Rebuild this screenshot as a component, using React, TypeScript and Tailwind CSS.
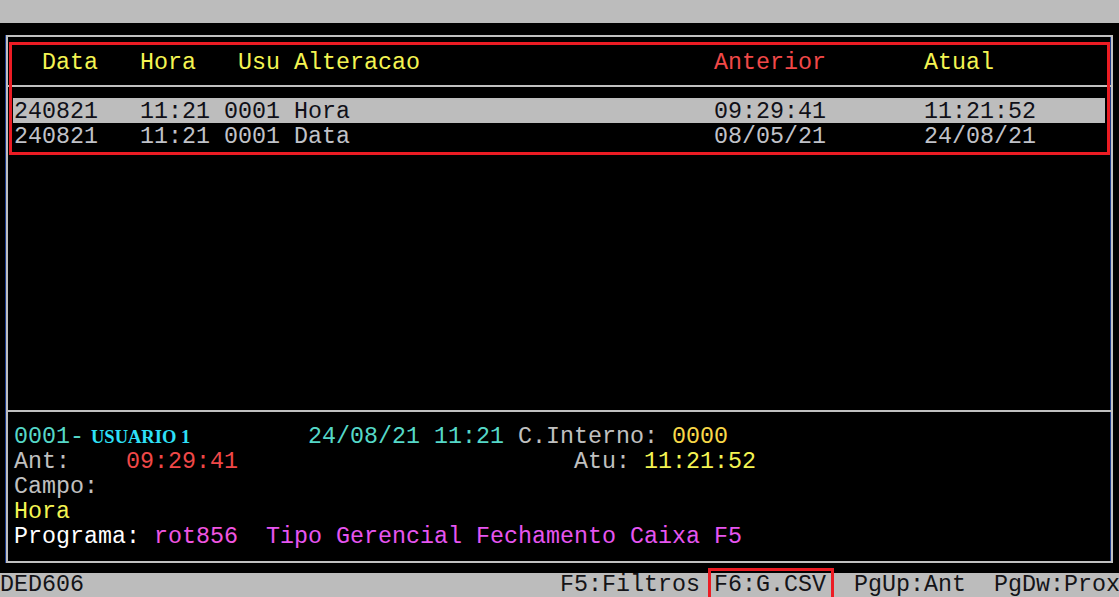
import React from 'react';

const mono = "font-['Liberation_Mono',monospace] text-[23.333px]";

const changes = [
  { data: '240821', hora: '11:21', usu: '0001', campo: 'Hora', ant: '09:29:41', atu: '11:21:52' },
  { data: '240821', hora: '11:21', usu: '0001', campo: 'Data', ant: '08/05/21', atu: '24/08/21' },
];

const Line: React.FC<{ children?: React.ReactNode; className?: string }> = ({ children, className = '' }) => (
  <div className={`h-[25px] pt-[2px] leading-[25px] whitespace-pre ${className}`}>{children}</div>
);

const Separator = () => <div className="h-[2px] bg-[#c0c0c0]" />;

const App: React.FC = () => {
  return (
    <div className={`relative w-[1119px] h-[597px] overflow-hidden bg-black flex flex-col ${mono}`}>
      <div className="h-[23px] bg-[#bcbcbc]" />

      <div className="h-[550px] pt-[12px]">
        {/* moldura principal */}
        <div className="ml-[6px] w-[1107px] h-[528px] border-2 border-[#c0c0c0] shadow-[-1px_0_0_#1a3a8a,inset_-1px_0_0_#1a3a8a] flex flex-col">
          <div className="h-[48px] pt-[12px] pl-[6px]">
            <Line className="text-[#f4f452]">
              {'  Data   Hora   Usu Alteracao'.padEnd(50)}
              <span className="text-[#f04848]">Anterior</span>
              {'       Atual'}
            </Line>
          </div>
          <Separator />

          <div className="flex-1 pt-[11px]">
            {changes.map((c, i) => (
              <Line
                key={i}
                className={
                  i === 0
                    ? 'ml-[5px] w-[1092px] pl-[1px] bg-[#bdbdbd] text-[#101018]'
                    : 'pl-[6px] text-[#c0c2c8]'
                }
              >
                {`${c.data}   ${c.hora} ${c.usu} ${c.campo.padEnd(30)}${c.ant}       ${c.atu}`}
              </Line>
            ))}
          </div>
          <Separator />

          <div className="pt-[11px] pb-[13px] pl-[6px] text-[#c0c0c0]">
            <Line>
              <span className="inline-block w-[294px]">
                <span className="text-[#55d8c8]">0001-</span>
                <span className="ml-[7px] font-['Liberation_Serif',serif] font-bold text-[18.5px] text-[#2ee0f8]">USUARIO 1</span>
              </span>
              <span className="text-[#55d8c8]">24/08/21 11:21</span>
              {' C.Interno: '}
              <span className="text-[#f8d848]">0000</span>
            </Line>
            <Line>
              {'Ant:    '}
              <span className="text-[#f04848]">09:29:41</span>
              {' '.repeat(24)}
              {'Atu: '}
              <span className="text-[#f4f452]">11:21:52</span>
            </Line>
            <Line>Campo:</Line>
            <Line className="text-[#f4f452]">Hora</Line>
            <Line>
              <span className="text-white">Programa: </span>
              <span className="text-[#f055e0]">rot856</span>
              <span className="text-[#e655f0]">{'  Tipo Gerencial Fechamento Caixa F5'}</span>
            </Line>
          </div>
        </div>
      </div>

      <div className="h-[24px] bg-[#bcbcbc] text-[#141418] leading-[23px] whitespace-pre pt-[1px]">
        {'DED606' + ' '.repeat(34) + 'F5:Filtros F6:G.CSV  PgUp:Ant  PgDw:Prox'}
      </div>

      {/* marcacoes em vermelho */}
      <div className="absolute left-[9px] top-[42px] w-[1101px] h-[113px] border-[3px] border-[#ec1c24]" />
      <div className="absolute left-[708px] top-[568px] w-[126px] h-[32px] border-[3px] border-[#ec1c24]" />
    </div>
  );
};

export default App;
